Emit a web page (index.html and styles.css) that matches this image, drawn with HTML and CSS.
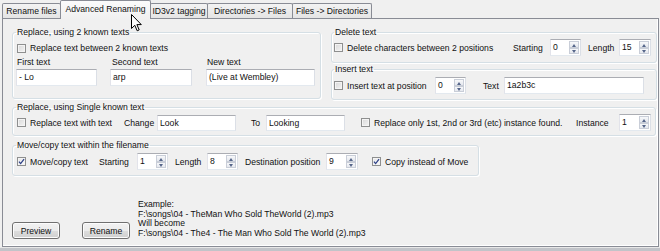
FILE: index.html
```html
<!DOCTYPE html>
<html>
<head>
<meta charset="utf-8">
<link rel="stylesheet" href="styles.css">
</head>
<body>
<div class="tabs">
  <div class="tab t1">Rename files</div>
  <div class="tab t2 active">Advanced Renaming</div>
  <div class="tab t3">ID3v2 tagging</div>
  <div class="tab t4">Directories -&gt; Files</div>
  <div class="tab t5">Files -&gt; Directories</div>
</div>
<div class="panel">
  <div class="top">
    <fieldset class="g g1">
      <legend>Replace, using 2 known texts</legend>
      <div class="row r-chk"><label class="chk"><span class="box"></span>Replace text between 2 known texts</label></div>
      <div class="cols">
        <div class="col c1"><div class="lbl">First text</div><div class="inp">- Lo</div></div>
        <div class="col c2"><div class="lbl">Second text</div><div class="inp">arp</div></div>
        <div class="col c3"><div class="lbl">New text</div><div class="inp">(Live at Wembley)</div></div>
      </div>
    </fieldset>
    <div class="rightcol">
      <fieldset class="g g2">
        <legend>Delete text</legend>
        <div class="row">
          <label class="chk w179"><span class="box"></span>Delete characters between 2 positions</label>
          <span class="lab w37">Starting</span>
          <div class="spin"><span class="val">0</span><span class="btns"><i class="up"></i><i class="dn"></i></span></div>
          <span class="lab w31 ml7">Length</span>
          <div class="spin s32"><span class="val">15</span><span class="btns"><i class="up"></i><i class="dn"></i></span></div>
        </div>
      </fieldset>
      <fieldset class="g g3">
        <legend>Insert text</legend>
        <div class="row">
          <label class="chk w101"><span class="box"></span>Insert text at position</label>
          <div class="spin"><span class="val">0</span><span class="btns"><i class="up"></i><i class="dn"></i></span></div>
          <span class="lab w21 ml17">Text</span>
          <div class="inp w140">1a2b3c</div>
        </div>
      </fieldset>
    </div>
  </div>
  <fieldset class="g g4">
    <legend>Replace, using Single known text</legend>
    <div class="row">
      <label class="chk w107"><span class="box"></span>Replace text with text</label>
      <span class="lab w33">Change</span>
      <div class="inp w79 h16">Look</div>
      <span class="lab w15 ml15">To</span>
      <div class="inp w79 h16">Looking</div>
      <label class="chk w215 ml16"><span class="box"></span>Replace only 1st, 2nd or 3rd (etc) instance found.</label>
      <span class="lab w43">Instance</span>
      <div class="spin s32"><span class="val">1</span><span class="btns"><i class="up"></i><i class="dn"></i></span></div>
    </div>
  </fieldset>
  <fieldset class="g g5">
    <legend>Move/copy text within the filename</legend>
    <div class="row">
      <label class="chk w82"><span class="box on"><svg viewBox="0 0 9 9" width="7" height="7"><path d="M1.2 4.6 L3.4 7.2 L7.8 1.4" fill="none" stroke="#2c3f86" stroke-width="1.6"/></svg></span>Move/copy text</label>
      <span class="lab w38">Starting</span>
      <div class="spin"><span class="val">1</span><span class="btns"><i class="up"></i><i class="dn"></i></span></div>
      <span class="lab w32 ml7">Length</span>
      <div class="spin"><span class="val">8</span><span class="btns"><i class="up"></i><i class="dn"></i></span></div>
      <span class="lab w81 ml7">Destination position</span>
      <div class="spin s32"><span class="val">9</span><span class="btns"><i class="up"></i><i class="dn"></i></span></div>
      <label class="chk ml14"><span class="box on"><svg viewBox="0 0 9 9" width="7" height="7"><path d="M1.2 4.6 L3.4 7.2 L7.8 1.4" fill="none" stroke="#2c3f86" stroke-width="1.6"/></svg></span>Copy instead of Move</label>
    </div>
  </fieldset>
  <div class="bottom">
    <button class="btn">Preview</button>
    <button class="btn ml22">Rename</button>
    <div class="example">
      <div>Example:</div>
      <div>F:\songs\04 - TheMan Who Sold TheWorld (2).mp3</div>
      <div>Will become</div>
      <div>F:\songs\04 - The4 - The Man Who Sold The World (2).mp3</div>
    </div>
  </div>
</div>
<div class="strip"></div>
<svg class="cursor" width="12" height="19" viewBox="0 0 12 19"><path d="M0.5 0.5 L0.5 14.5 L3.8 11.3 L6.2 16.8 L8.2 15.9 L5.9 10.6 L10.3 10.6 Z" fill="#fff" stroke="#000" stroke-width="1" stroke-linejoin="miter"/></svg>
</body>
</html>
```

FILE: styles.css
```css
* { box-sizing: border-box; }
html, body { margin: 0; padding: 0; }
body {
  width: 660px;
  height: 251px;
  overflow: hidden;
  position: relative;
  background: #f0f0f0;
  font-family: "Liberation Sans", Arial, sans-serif;
  font-size: 8.65px;
  line-height: 10px;
  color: #111;
}

/* tabs */
.tabs {
  display: flex;
  align-items: flex-end;
  height: 18px;
  padding-left: 2px;
  position: relative;
  z-index: 2;
}
.tab {
  height: 15px;
  border: 1px solid #898c95;
  border-bottom: none;
  border-radius: 2px 2px 0 0;
  background: linear-gradient(#f3f3f3, #e4e4e4);
  margin-right: -1px;
  text-align: center;
  padding-top: 2px;
  white-space: nowrap;
}
.tab.active {
  height: 19px;
  margin-bottom: -1px;
  padding-top: 3px;
  background: linear-gradient(#fbfbfb, #f0f0f0);
  position: relative;
  z-index: 1;
}
.t1 { width: 59px; }
.t2 { width: 91px; }
.t3 { width: 58px; }
.t4 { width: 86px; }
.t5 { width: 80px; }

/* panel */
.panel {
  margin-left: 2px;
  width: 657px;
  height: 229px;
  border: 1px solid #898c95;
  background: #f0f0f0;
  padding: 8px 0 0 9px;
  box-shadow: inset -1px -1px 0 #fff;
}
.strip {
  height: 4px;
  background: #c2c4c9;
  border-top: 1px solid #e8e8e8;
}

.top { display: flex; gap: 10px; }
.rightcol { display: flex; flex-direction: column; width: 326px; }

/* group boxes */
fieldset.g {
  margin: 0;
  padding: 0 0 0 3px;
  border: 1px solid #d5dfe5;
  border-radius: 3px;
  box-shadow: inset 1px 1px 0 #fff, 1px 1px 0 #fff;
  min-width: 0;
}
fieldset.g legend {
  padding: 0 1px;
  line-height: 10px;
}
fieldset.g1 { width: 309px; height: 72px; }
fieldset.g2 { height: 36px; padding-left: 2px; }
fieldset.g3 { height: 36px; margin-top: 1px; padding-left: 2px; }
fieldset.g4 { width: 644px; height: 34px; margin-top: 2px; }
fieldset.g5 { width: 467px; height: 36px; margin-top: 4px; }

.row { display: flex; align-items: center; height: 17px; white-space: nowrap; }
.g1 .r-chk { height: 12px; margin-top: 5px; padding-left: 1px; }
.g2 .row { margin-top: 2px; }
.g3 .row { margin-top: 3px; }
.g4 .row { margin-top: 2px; padding-left: 1px; }
.g5 .row { margin-top: 3px; padding-left: 1px; }

.cols { display: flex; margin-top: 3px; }
.col .lbl { padding-left: 1px; height: 10px; }
.col .inp { margin-top: 2px; }
.c1 { width: 94px; }
.c1 .inp { width: 81px; }
.c2 { width: 96px; }
.c2 .lbl { padding-left: 2px; }
.c2 .inp { width: 82px; }
.c3 .inp { width: 109px; }

/* checkbox */
.chk { display: flex; align-items: center; flex: none; }
.box {
  width: 9px;
  height: 9px;
  margin-right: 4px;
  border: 1px solid #8e8f8f;
  background: linear-gradient(135deg, #d8d8d8, #f4f4f4);
  box-shadow: inset 0 0 0 1px #f4f4f4;
  display: flex;
  align-items: center;
  justify-content: center;
  flex: none;
}
.box.on { background: linear-gradient(135deg, #e4e4e4, #fbfbfb); }

.lab { flex: none; }

/* inputs */
.inp {
  height: 17px;
  border: 1px solid;
  border-color: #abadb3 #dbdfe6 #e3e9ef #e2e3ea;
  background: #fff;
  padding-left: 2px;
  line-height: 15px;
  white-space: nowrap;
  overflow: hidden;
  flex: none;
}
.h16 { height: 16px; line-height: 14px; }

/* spinner */
.spin {
  display: flex;
  width: 31px;
  height: 17px;
  border: 1px solid;
  border-color: #abadb3 #dbdfe6 #e3e9ef #e2e3ea;
  background: #fff;
  flex: none;
}
.spin.s32 { width: 32px; }
.spin .val { flex: 1; padding-left: 2px; line-height: 15px; }
.spin .btns {
  width: 11px;
  display: flex;
  flex-direction: column;
  padding: 1px 1px 1px 0;
}
.spin .btns i {
  flex: 1;
  position: relative;
  border: 1px solid #c9ced8;
  background: linear-gradient(#f7f8fa, #e5e8ee);
}
.spin .btns i::after {
  content: "";
  position: absolute;
  left: 2px;
  border-left: 2.5px solid transparent;
  border-right: 2.5px solid transparent;
}
.spin .btns .up::after { top: 1.5px; border-bottom: 3px solid #56668a; }
.spin .btns .dn::after { top: 1.5px; border-top: 3px solid #56668a; }

/* widths & margins */
.w15 { width: 15px; }
.w21 { width: 21px; }
.w31 { width: 31px; }
.w32 { width: 32px; }
.w33 { width: 33px; }
.w37 { width: 37px; }
.w38 { width: 38px; }
.w43 { width: 43px; }
.w79 { width: 79px; }
.w81 { width: 81px; }
.w82 { width: 82px; }
.w101 { width: 101px; }
.w107 { width: 107px; }
.w140 { width: 140px; }
.w179 { width: 179px; }
.w215 { width: 215px; }
.ml7 { margin-left: 7px; }
.ml14 { margin-left: 14px; }
.ml15 { margin-left: 15px; }
.ml16 { margin-left: 16px; }
.ml17 { margin-left: 17px; }

/* bottom */
.bottom {
  display: flex;
  align-items: flex-end;
  margin-top: 24px;
  height: 39px;
}
.btn {
  width: 48px;
  height: 17px;
  padding: 0;
  border: 1px solid #707070;
  border-radius: 3px;
  background: linear-gradient(#f2f2f2 0%, #ebebeb 50%, #dddddd 51%, #cfcfcf 100%);
  box-shadow: inset 0 0 0 1px #fcfcfc;
  font: inherit;
  color: #111;
  flex: none;
}
.btn.ml22 { margin-left: 22px; }
.example {
  margin-left: 8px;
  line-height: 9.5px;
  white-space: nowrap;
  padding-bottom: 1px;
}

.cursor {
  position: absolute;
  left: 131px;
  top: 14px;
  z-index: 5;
}
```
